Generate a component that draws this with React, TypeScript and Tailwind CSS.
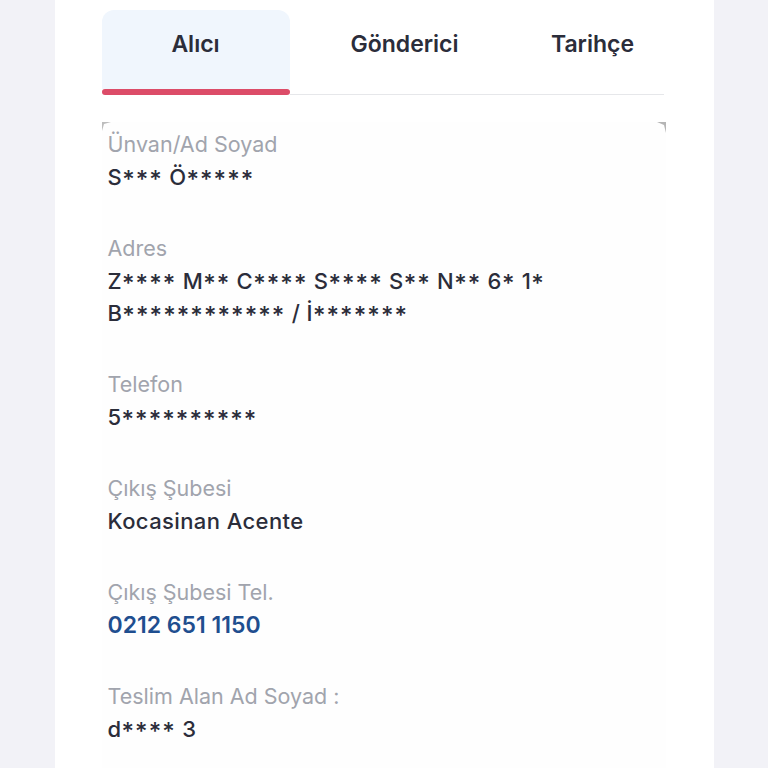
const rows: { label: string; lines: string[]; blue?: boolean }[] = [
  { label: 'Ünvan/Ad Soyad', lines: ['S*** Ö*****'] },
  { label: 'Adres', lines: ['Z**** M** C**** S**** S** N** 6* 1*', 'B************ / İ*******'] },
  { label: 'Telefon', lines: ['5**********'] },
  { label: 'Çıkış Şubesi', lines: ['Kocasinan Acente'] },
  { label: 'Çıkış Şubesi Tel.', lines: ['0212 651 1150'], blue: true },
  { label: 'Teslim Alan Ad Soyad :', lines: ['d**** 3'] },
];

// masked values: the asterisks are larger and centred on the caps
function Masked({ text }: { text: string }) {
  const parts = text.split(/(\*+)/);
  return (
    <>
      {parts.map((p, i) =>
        p.startsWith('*') ? (
          <span key={i} className="text-[24px] leading-none tracking-[1.1px] align-[-3px]">
            {p}
          </span>
        ) : (
          <span key={i}>{p}</span>
        )
      )}
    </>
  );
}

export default function App() {
  return (
    <div className="w-[768px] h-[768px] overflow-hidden bg-[#f2f2f7] flex justify-center" style={{ fontFamily: 'Inter, "Noto Sans", sans-serif' }}>
      <div className="w-[659px] h-full bg-white pt-[10px] px-[47px] flex flex-col">
        {/* tabs */}
        <div className="flex w-[562px]">
          <div className="w-[188px] flex flex-col">
            <div className="h-[79px] bg-[#f0f6fd] rounded-t-[12px] flex items-center justify-center pb-[10px] text-[23px] font-semibold text-[#2b2d3a]">
              Alıcı
            </div>
            <div className="h-[6px] bg-[#dc4c68] rounded-full" />
          </div>
          <div className="w-[230px] flex flex-col">
            <div className="h-[79px] flex items-center justify-center pb-[10px] text-[23px] font-semibold text-[#2b2d3a]">
              Gönderici
            </div>
            <div className="h-[6px] border-b border-[#e6e7ea]" />
          </div>
          <div className="w-[144px] flex flex-col">
            <div className="h-[79px] flex items-center justify-center pb-[10px] pl-[2px] text-[23px] font-semibold text-[#2b2d3a]">
              Tarihçe
            </div>
            <div className="h-[6px] border-b border-[#e6e7ea]" />
          </div>
        </div>

        {/* details */}
        <div className="relative mt-[27px] w-[564px] flex-1 bg-[#fefefe] pl-[6px] pt-[5px]">
          <svg className="absolute left-0 top-0" width="9" height="9" viewBox="0 0 9 9">
            <path d="M0 0 H9 L2 2 L0 9 Z" fill="#bdbdbd" />
          </svg>
          <svg className="absolute right-0 top-0" width="9" height="11" viewBox="0 0 9 11">
            <path d="M0 0 H9 V11 L7 3 Z" fill="#b5b5b5" />
          </svg>
          {rows.map((row, i) => (
            <div key={i} className="mb-[38px]">
              <div className="h-[34px] text-[21.5px] leading-[34px] text-[#a1a4ad]">{row.label}</div>
              {row.lines.map((line, j) => (
                <div
                  key={j}
                  className={
                    row.blue
                      ? 'h-[32px] text-[23px] leading-[32px] font-semibold text-[#1f4e8f]'
                      : 'h-[32px] text-[22px] leading-[32px] font-medium text-[#2b2d3a] tracking-[0.4px]'
                  }
                >
                  <Masked text={line} />
                </div>
              ))}
            </div>
          ))}
        </div>
      </div>
    </div>
  );
}
